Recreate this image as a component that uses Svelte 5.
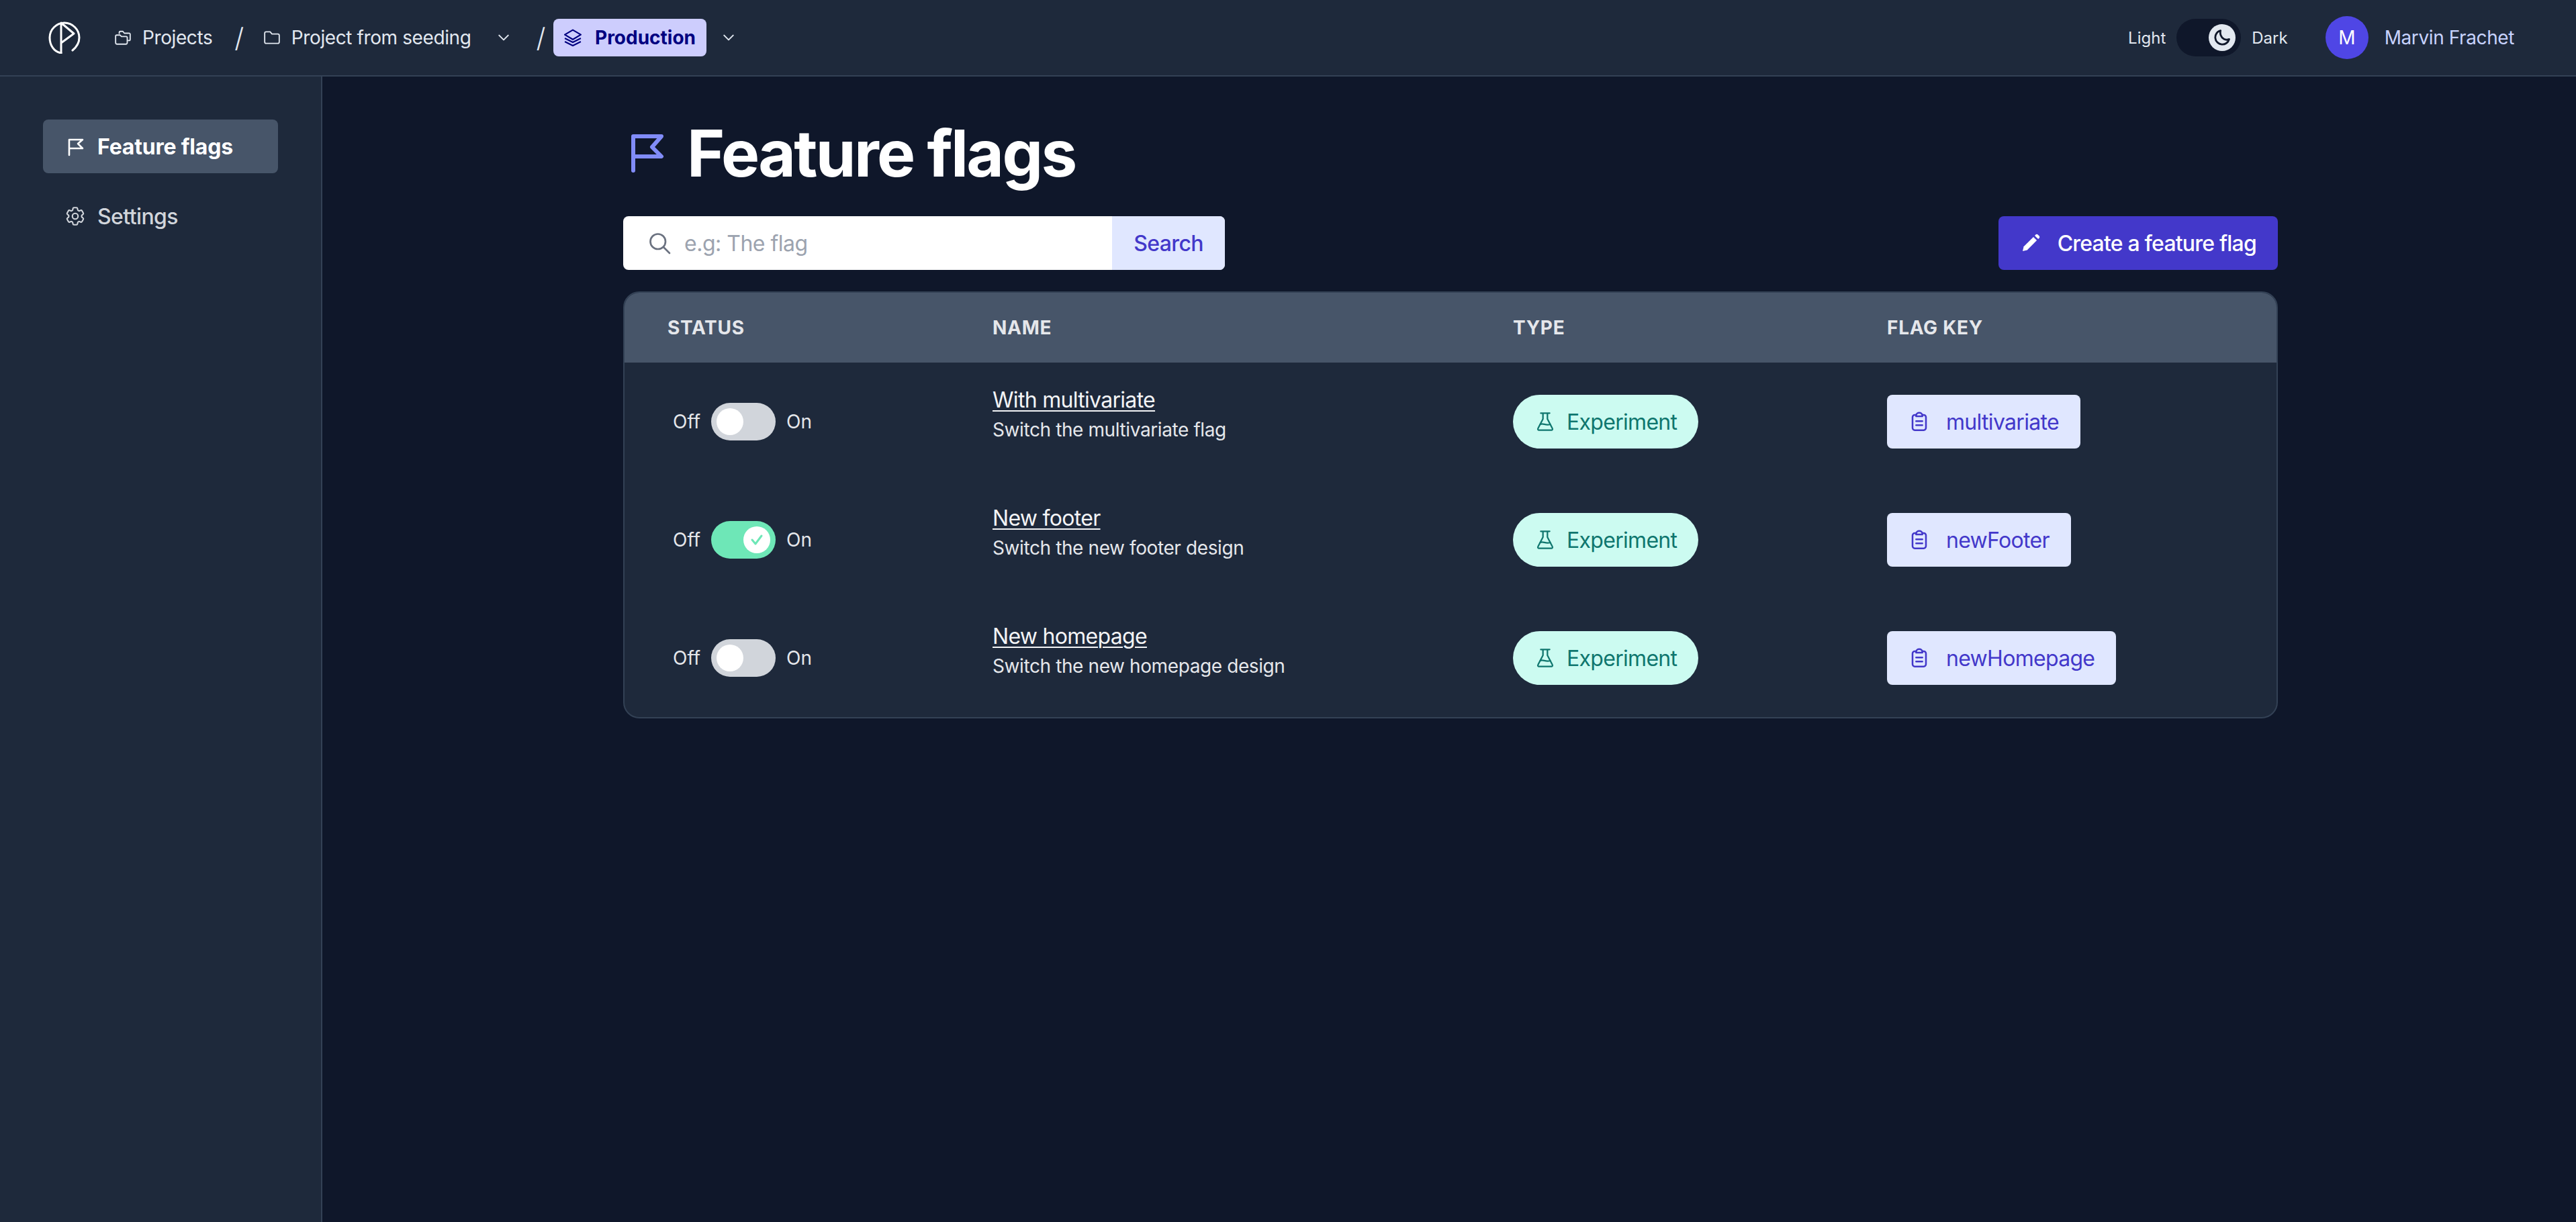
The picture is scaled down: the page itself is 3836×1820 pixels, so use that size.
<script lang="ts">
	const flags = [
		{ name: 'With multivariate', desc: 'Switch the multivariate flag', key: 'multivariate', on: false },
		{ name: 'New footer', desc: 'Switch the new footer design', key: 'newFooter', on: true },
		{ name: 'New homepage', desc: 'Switch the new homepage design', key: 'newHomepage', on: false }
	];
</script>

<div class="app">
	<header class="topbar">
		<svg class="logo" viewBox="0 0 48 48" fill="none" stroke="#fff" stroke-width="3" stroke-linecap="round" stroke-linejoin="round">
			<path d="M19 47C8 45 2 35 2 24 2 12 12 2 24 2s22 10 22 22c0 8-4 14-10 19" />
			<path d="M19 47V2l19 16-19 14" />
		</svg>
		<nav class="crumbs">
			<span class="crumb">
				<svg class="ico" viewBox="0 0 24 24" fill="none" stroke="currentColor" stroke-width="1.7" stroke-linejoin="round">
					<path d="M7 7V5a1.500 1.500 0 0 1 1.500-1.500h3.500l2 2.500h6A1.500 1.500 0 0 1 22 7.500v7a1.500 1.500 0 0 1-1.500 1.500H18" />
					<path d="M2 10a1.500 1.500 0 0 1 1.500-1.500h4.500l2 2h6.500A1.500 1.500 0 0 1 18 12v7a2 2 0 0 1-2 2H4a2 2 0 0 1-2-2Z" />
				</svg>
				Projects
			</span>
			<span class="slash">/</span>
			<span class="crumb">
				<svg class="ico" viewBox="0 0 24 24" fill="none" stroke="currentColor" stroke-width="1.700" stroke-linejoin="round">
					<path d="M2 6A2 2 0 0 1 4 4h5.500l2.500 3h8a2 2 0 0 1 2 2v9a2 2 0 0 1-2 2H4a2 2 0 0 1-2-2Z" />
				</svg>
				Project from seeding
			</span>
			<svg class="chev chev-project" viewBox="0 0 16 16" fill="none" stroke="currentColor" stroke-width="1.800" stroke-linecap="round" stroke-linejoin="round"><path d="m2 5 6 6 6-6" /></svg>
			<span class="slash slash-env">/</span>
			<span class="env">
				<svg class="ico" viewBox="0 0 24 24" fill="none" stroke="currentColor" stroke-width="2" stroke-linejoin="round">
					<path d="M12 1.500 1 8l11 6.500L23 8Z" />
					<path d="m1 13 11 5.500L23 13M1 17.500 12 23l11-5.500" />
				</svg>
				Production
			</span>
			<svg class="chev" viewBox="0 0 16 16" fill="none" stroke="currentColor" stroke-width="1.800" stroke-linecap="round" stroke-linejoin="round"><path d="m2 5 6 6 6-6" /></svg>
		</nav>
		<div class="topbar-right">
			<span class="mode">Light</span>
			<span class="mode-switch">
				<span class="mode-knob">
					<svg viewBox="0 0 24 24" fill="none" stroke="#0f172a" stroke-width="2.400" stroke-linejoin="round">
						<path d="M10 3a9 9 0 1 0 11 11c-2 1-4.500 1-6.500 0C10.500 12 9 7 10 3Z" />
					</svg>
				</span>
			</span>
			<span class="mode">Dark</span>
			<span class="avatar">M</span>
			<span class="username">Marvin Frachet</span>
		</div>
	</header>

	<div class="body">
		<aside class="sidebar">
			<a class="side-link active" href="#flags">
				<svg class="side-ico" viewBox="0 0 34 34" fill="none" stroke="currentColor" stroke-width="2.600" stroke-linecap="round" stroke-linejoin="round">
					<path d="M8 30V7h20l-7 6 7 7H8" />
				</svg>
				Feature flags
			</a>
			<a class="side-link" href="#settings">
				<svg class="side-ico" viewBox="0 0 24 24" fill="none" stroke="currentColor" stroke-width="1.500" stroke-linejoin="round">
					<path d="M9.594 3.940c.09-.542.56-.94 1.110-.94h2.593c.55 0 1.020.398 1.110.94l.213 1.281c.063.374.313.686.645.870.074.04.147.083.22.127.325.196.72.257 1.075.124l1.217-.456a1.125 1.125 0 0 1 1.370.49l1.296 2.247a1.125 1.125 0 0 1-.26 1.431l-1.003.827c-.293.241-.438.613-.43.992a7.723 7.723 0 0 1 0 .255c-.008.378.137.75.43.991l1.004.827c.424.35.534.955.26 1.430l-1.298 2.247a1.125 1.125 0 0 1-1.369.491l-1.217-.456c-.355-.133-.75-.072-1.076.124a6.470 6.470 0 0 1-.22.128c-.331.183-.581.495-.644.869l-.213 1.281c-.09.543-.56.94-1.110.94h-2.594c-.55 0-1.019-.398-1.110-.94l-.213-1.281c-.062-.374-.312-.686-.644-.87a6.520 6.520 0 0 1-.22-.127c-.325-.196-.72-.257-1.076-.124l-1.217.456a1.125 1.125 0 0 1-1.369-.49l-1.297-2.247a1.125 1.125 0 0 1 .26-1.431l1.004-.827c.292-.24.437-.613.43-.991a6.932 6.932 0 0 1 0-.255c.007-.38-.138-.751-.43-.992l-1.004-.827a1.125 1.125 0 0 1-.26-1.430l1.297-2.247a1.125 1.125 0 0 1 1.370-.491l1.216.456c.356.133.751.072 1.076-.124.072-.044.146-.086.22-.128.332-.183.582-.495.644-.869l.214-1.280Z" />
					<circle cx="12" cy="12" r="3" />
				</svg>
				Settings
			</a>
		</aside>

		<main class="main">
			<div class="content">
				<h1 class="title">
					<svg class="title-ico" viewBox="0 0 54 60" fill="none" stroke="#818cf8" stroke-width="6" stroke-linecap="round" stroke-linejoin="round">
						<path d="M6 56V5h42L34 21l14 14H6" />
					</svg>
					Feature flags
				</h1>

				<div class="toolbar">
					<form class="search">
						<svg class="search-ico" viewBox="0 0 24 24" fill="none" stroke="#6b7280" stroke-width="1.800" stroke-linecap="round"><circle cx="10.500" cy="10.500" r="7.500" /><path d="m16 16 6 6" /></svg>
						<input class="search-input" placeholder="e.g: The flag" />
						<button class="search-btn" type="button">Search</button>
					</form>
					<button class="create" type="button">
						<svg class="ico-lg" viewBox="0 0 24 24" fill="#fff"><path d="M3 21l1.200-5L15 5.200 18.800 9 8 19.800Z" /><path d="m16.500 3.700 1.200-1.200a1.500 1.500 0 0 1 2.100 0l1.700 1.700a1.500 1.500 0 0 1 0 2.100l-1.200 1.200Z" /></svg>
						Create a feature flag
					</button>
				</div>

				<div class="table-wrap">
					<table class="flags">
						<colgroup>
							<col class="c-status" />
							<col class="c-name" />
							<col class="c-type" />
							<col />
						</colgroup>
						<thead>
							<tr>
								<th>Status</th>
								<th>Name</th>
								<th>Type</th>
								<th>Flag key</th>
							</tr>
						</thead>
						<tbody>
							{#each flags as flag}
								<tr>
									<td>
										<div class="status">
											<span>Off</span>
											<span class="switch" class:on={flag.on}>
												<span class="knob">
													{#if flag.on}
														<svg viewBox="0 0 24 24" fill="none" stroke="#6ee7b7" stroke-width="3" stroke-linecap="round" stroke-linejoin="round"><path d="m5 12 5 6 9-12" /></svg>
													{/if}
												</span>
											</span>
											<span>On</span>
										</div>
									</td>
									<td>
										<a class="flag-name" href="#flag">{flag.name}</a>
										<div class="flag-desc">{flag.desc}</div>
									</td>
									<td>
										<span class="tag">
											<svg class="ico-lg" viewBox="0 0 24 24" fill="none" stroke="currentColor" stroke-width="1.700" stroke-linecap="round" stroke-linejoin="round">
												<path d="M7 2.500h10M9.500 2.500V9L4 19.500A1.300 1.300 0 0 0 5.200 21.500h13.600a1.300 1.300 0 0 0 1.200-2L14.500 9V2.500" />
												<path d="M6.500 15c3-2 6 2 11 0" />
											</svg>
											Experiment
										</span>
									</td>
									<td>
										<button class="key" type="button">
											<svg class="ico-lg" viewBox="0 0 24 24" fill="none" stroke="currentColor" stroke-width="1.900" stroke-linecap="round" stroke-linejoin="round">
												<path d="M8.500 4.500H7A2.500 2.500 0 0 0 4.500 7v12A2.500 2.500 0 0 0 7 21.500h10a2.500 2.500 0 0 0 2.500-2.500V7A2.500 2.500 0 0 0 17 4.500h-1.500" />
												<path d="M8.500 5a3.500 3 0 0 1 7 0v1h-7ZM8.500 11.500h7M8.500 16h7" />
											</svg>
											{flag.key}
										</button>
									</td>
								</tr>
							{/each}
						</tbody>
					</table>
				</div>
			</div>
		</main>
	</div>
</div>

<style>
	:global(body) {
		margin: 0;
		background: #0f172a;
		font-family: Inter, 'Noto Sans', sans-serif;
		-webkit-font-smoothing: antialiased;
	}
	.app {
		display: flex;
		flex-direction: column;
		height: 1820px;
		overflow: hidden;
	}
	.topbar {
		display: flex;
		align-items: center;
		height: 112px;
		flex: none;
		box-sizing: content-box;
		padding: 0 92px 0 72px;
		background: #1e293b;
		border-bottom: 2px solid #334155;
		color: #e2e8f0;
		font-size: 28px;
		letter-spacing: -0.4px;
	}
	.logo {
		width: 48px;
		height: 48px;
		flex: none;
	}
	.crumbs {
		display: flex;
		align-items: center;
		margin-left: 50px;
	}
	.crumb {
		display: flex;
		align-items: center;
		gap: 16px;
		white-space: nowrap;
	}
	.ico {
		width: 26px;
		height: 26px;
		flex: none;
	}
	.ico-lg {
		width: 32px;
		height: 32px;
		flex: none;
	}
	.slash {
		font-size: 40px;
		font-weight: 300;
		margin: 0 29px 0 33px;
		color: #e2e8f0;
	}
	.chev {
		width: 18px;
		height: 18px;
		flex: none;
		margin-left: 24px;
		color: #e2e8f0;
	}
	.chev-project {
		margin-left: 40px;
	}
	.slash-env {
		margin: 0 12px 0 39px;
	}
	.env {
		display: flex;
		align-items: center;
		gap: 20px;
		height: 56px;
		padding: 0 16px;
		border-radius: 8px;
		background: #cdcdfd;
		color: #000080;
		font-weight: 700;
		letter-spacing: 0;
	}
	.topbar-right {
		display: flex;
		align-items: center;
		margin-left: auto;
	}
	.mode {
		font-size: 24px;
		color: #e2e8f0;
		letter-spacing: 0;
	}
	.mode-switch {
		display: flex;
		align-items: center;
		justify-content: flex-end;
		box-sizing: border-box;
		width: 96px;
		height: 56px;
		margin: 0 16px;
		padding: 0 8px;
		border-radius: 28px;
		background: #0f172a;
	}
	.mode-knob {
		display: flex;
		align-items: center;
		justify-content: center;
		width: 40px;
		height: 40px;
		border-radius: 50%;
		background: #e2e8f0;
	}
	.mode-knob svg {
		width: 28px;
		height: 28px;
	}
	.avatar {
		display: flex;
		align-items: center;
		justify-content: center;
		width: 64px;
		height: 64px;
		margin-left: 56px;
		border-radius: 50%;
		background: #4f46e5;
		color: #fff;
		font-size: 28px;
	}
	.username {
		margin-left: 24px;
		color: #c7d2fe;
		font-size: 28px;
		white-space: nowrap;
	}
	.body {
		display: flex;
		flex: 1;
		min-height: 0;
	}
	.sidebar {
		display: flex;
		flex-direction: column;
		gap: 24px;
		flex: none;
		box-sizing: border-box;
		width: 480px;
		padding: 64px 64px 0;
		background: #1e293b;
		border-right: 2px solid #334155;
	}
	.side-link {
		display: flex;
		align-items: center;
		gap: 16px;
		width: 350px;
		height: 80px;
		box-sizing: border-box;
		padding-left: 31px;
		border-radius: 8px;
		color: #d1d5db;
		font-size: 32px;
		font-weight: 500;
		letter-spacing: -0.6px;
		text-decoration: none;
	}
	.side-link.active {
		background: #475569;
		color: #fff;
		font-weight: 700;
		letter-spacing: -0.2px;
	}
	.side-ico {
		width: 34px;
		height: 34px;
		flex: none;
	}
	.main {
		flex: 1;
		min-width: 0;
		background: #0f172a;
	}
	.content {
		width: 2464px;
		margin-left: 448px;
	}
	.title {
		display: flex;
		align-items: center;
		gap: 32px;
		height: 112px;
		margin: 58px 0 38px;
		color: #fff;
		font-size: 96px;
		font-weight: 700;
		line-height: 112px;
		letter-spacing: -0.028em;
	}
	.title-ico {
		width: 54px;
		height: 60px;
		margin-left: 9px;
		flex: none;
	}
	.toolbar {
		display: flex;
		justify-content: space-between;
		align-items: center;
		margin-bottom: 32px;
	}
	.search {
		display: flex;
		align-items: center;
		width: 896px;
		height: 80px;
		overflow: hidden;
		border-radius: 8px;
		background: #fff;
	}
	.search-ico {
		width: 36px;
		height: 36px;
		flex: none;
		margin: 0 17px 0 36px;
	}
	.search-input {
		flex: 1;
		min-width: 0;
		border: 0;
		outline: 0;
		background: none;
		font: inherit;
		font-size: 32px;
		letter-spacing: -0.5px;
		color: #111827;
	}
	.search-input::placeholder {
		color: #9ca3af;
	}
	.search-btn {
		align-self: stretch;
		border: 0;
		padding: 0 32px;
		background: #e0e7ff;
		color: #4338ca;
		font: inherit;
		font-size: 32px;
		font-weight: 500;
		letter-spacing: -0.6px;
	}
	.create {
		display: flex;
		align-items: center;
		gap: 24px;
		height: 80px;
		padding: 0 32px;
		border: 0;
		border-radius: 8px;
		background: #4338ca;
		color: #fff;
		font: inherit;
		font-size: 32px;
		font-weight: 500;
		letter-spacing: -0.8px;
		white-space: nowrap;
	}
	.table-wrap {
		overflow: hidden;
		border: 2px solid #334155;
		border-radius: 24px;
		background: #1e293b;
	}
	.flags {
		width: 100%;
		table-layout: fixed;
		border-collapse: collapse;
	}
	.c-status {
		width: 484px;
	}
	.c-name {
		width: 775px;
	}
	.c-type {
		width: 557px;
	}
	th {
		height: 104px;
		padding: 0 0 0 64px;
		background: #475569;
		color: #e5e7eb;
		font-size: 28px;
		font-weight: 700;
		letter-spacing: 0.025em;
		text-align: left;
		text-transform: uppercase;
	}
	td {
		height: 176px;
		padding: 0 0 0 64px;
		color: #e5e7eb;
		font-size: 28px;
		letter-spacing: -0.4px;
		vertical-align: middle;
	}
	.status {
		display: flex;
		align-items: center;
		gap: 16px;
		margin-left: 8px;
		letter-spacing: 0;
	}
	.switch {
		display: flex;
		align-items: center;
		box-sizing: border-box;
		width: 96px;
		height: 56px;
		padding: 0 8px;
		border-radius: 28px;
		background: #d1d5db;
	}
	.switch.on {
		justify-content: flex-end;
		background: #6ee7b7;
	}
	.knob {
		display: flex;
		align-items: center;
		justify-content: center;
		width: 40px;
		height: 40px;
		border-radius: 50%;
		background: #fff;
	}
	.knob svg {
		width: 24px;
		height: 24px;
	}
	.flag-name {
		color: #f3f4f6;
		font-size: 32px;
		line-height: 40px;
		letter-spacing: -0.7px;
		text-decoration: underline;
		text-underline-offset: 4px;
		text-decoration-thickness: 2px;
	}
	.flag-desc {
		margin-top: 4px;
		margin-bottom: 20px;
		line-height: 40px;
	}
	.tag {
		display: inline-flex;
		align-items: center;
		gap: 16px;
		height: 80px;
		padding: 0 32px;
		border-radius: 40px;
		background: #ccfbf1;
		color: #0f766e;
		font-size: 32px;
		letter-spacing: -0.7px;
	}
	.key {
		display: inline-flex;
		align-items: center;
		gap: 24px;
		height: 80px;
		padding: 0 32px;
		border: 0;
		border-radius: 8px;
		background: #e0e7ff;
		color: #4338ca;
		font: inherit;
		font-size: 32px;
		letter-spacing: -0.7px;
	}
</style>
